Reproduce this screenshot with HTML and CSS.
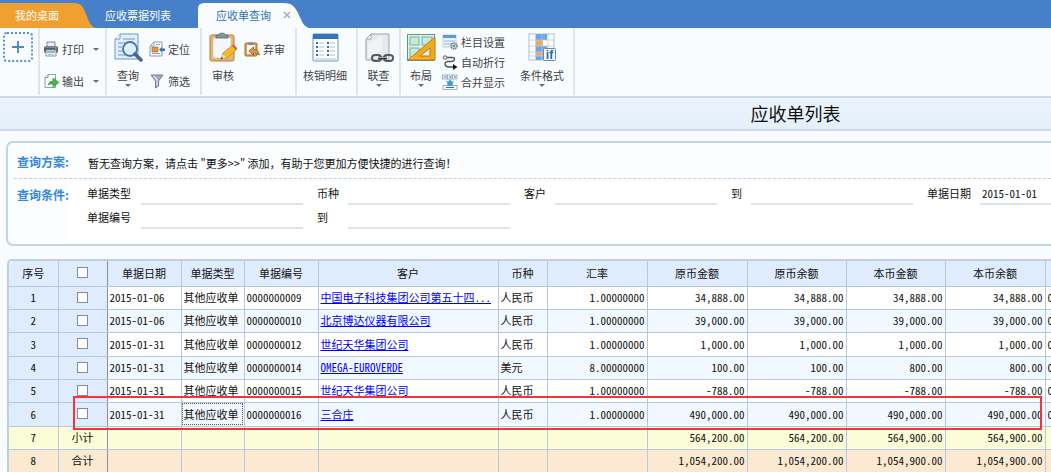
FILE: index.html
```html
<!DOCTYPE html>
<html lang="zh-CN">
<head>
<meta charset="utf-8">
<title>应收单列表</title>
<link rel="stylesheet" href="styles.css">
</head>
<body>
<nav class="tabs">
  <a class="tab tab-home" href="#home">
    <svg class="tab-shape" viewBox="0 0 96 25" preserveAspectRatio="none"><path d="M0 0H74C82 0 83 4 86 11C89 19 91 24 96 25H0Z" fill="#f0a030"/></svg>
    <span>我的桌面</span>
  </a>
  <a class="tab tab-plain" href="#bills"><span>应收票据列表</span></a>
  <a class="tab tab-active" href="#receivables">
    <svg class="tab-shape" viewBox="0 0 112 25" preserveAspectRatio="none"><path d="M0 25V6Q0 0 6 0H86C94 0 97 4 100 10C104 18 105 24 112 25Z" fill="#f9fcff"/></svg>
    <span>应收单查询</span>
    <svg class="tab-close" viewBox="0 0 8 8"><path d="M1 1L7 7M7 1L1 7" stroke="#a9b2bd" stroke-width="1.7"/></svg>
  </a>
</nav>

<div class="toolbar">
  <div class="group group-add">
    <button class="add" aria-label="添加"><svg width="14" height="14" viewBox="0 0 14 14"><path d="M7 1V13M1 7H13" stroke="#4b89c4" stroke-width="1.8"/></svg></button>
  </div>
  <div class="group group-output">
    <div class="stack">
      <button class="small"><svg class="icon" viewBox="0 0 16 16"><path d="M4 1H12V6H4Z" fill="#e9edf2" stroke="#7d8793"/><rect x="1" y="5" width="14" height="7" rx="2" fill="#555d68"/><path d="M2 6H14" stroke="#a7afb9"/><path d="M3 9H13V15H3Z" fill="#f5f8fb" stroke="#8c96a2"/><path d="M4 11H12" stroke="#48b7b0" stroke-width="1.5"/><path d="M5 13.5H11" stroke="#b4bbc4"/><circle cx="13" cy="7.5" r=".8" fill="#f28a62"/></svg><span>打印</span><i class="caret"></i></button>
      <button class="small"><svg class="icon" viewBox="0 0 16 16"><path d="M5 1.5H12.5V14.5H2V4.5Z" fill="#f9fbfc" stroke="#8c9cab"/><path d="M2 4.5H5V1.5" fill="#dce6ee" stroke="#8c9cab"/><path d="M5 12Q6 8 10 8V5L16 9.5L10 14V11Q7 10.500 5 12Z" fill="#48b548" stroke="#2c9838" stroke-width=".6"/></svg><span>输出</span><i class="caret"></i></button>
    </div>
  </div>
  <div class="group group-query">
    <button class="large"><svg class="icon-large" viewBox="0 0 30 30"><path d="M7 2H25V27H2V7Z" fill="#e2effc" stroke="#7295bd"/><path d="M2 7H7V2" fill="#fff" stroke="#7295bd"/><path d="M10 7H22M5 11H13M5 15H9M5 19H10M5 23H14" stroke="#94b6dc" stroke-width="1.500"/><circle cx="17" cy="17" r="7" fill="#d9edfe" fill-opacity=".9" stroke="#4774a9" stroke-width="1.8"/><path d="M13 17Q13 13 17 12" stroke="#fff" stroke-width="1.5" fill="none"/><path d="M22 22L28 28" stroke="#416692" stroke-width="3.500" stroke-linecap="round"/></svg><span>查询</span><i class="caret"></i></button>
    <div class="stack">
      <button class="small"><svg class="icon" viewBox="0 0 16 16"><path d="M5 1H13V15H1V5Z" fill="#f6fafe" stroke="#809cb9"/><path d="M1 5H5V1M7 3.500H11M3 12.5H11" fill="none" stroke="#8fabc9"/><rect x="3" y="6" width="6" height="5" fill="#e69639" stroke="#9b6a33" stroke-width=".6"/><path d="M10 8.500L13 6V7.500H16V10H13V11.5Z" fill="#3774b5"/></svg><span>定位</span></button>
      <button class="small"><svg class="icon" viewBox="0 0 16 16"><path d="M2 2H14L9.500 8V13L6.500 15V8Z" fill="#a6aac2" stroke="#73789a"/><path d="M4.500 3L8 7V13" stroke="#e4e6f0" stroke-width="1.200" fill="none"/></svg><span>筛选</span></button>
    </div>
  </div>
  <div class="group group-review">
    <button class="large"><svg class="icon-large" viewBox="0 0 30 30"><rect x="2" y="3" width="24" height="26" rx="1.500" fill="#e8b76f" stroke="#b37e38"/><path d="M5 6H23V23L20 26H5Z" fill="#f5f7fa" stroke="#cbbfae" stroke-width=".6"/><path d="M8 6V3H11Q11 1 14 1T17 3H20V6Z" fill="#89919b" stroke="#5b636d" stroke-width=".7"/><path d="M13 27L15 21L25 13L29 17L19 26Z" fill="#f6ba28" stroke="#af751c" stroke-width=".7"/><path d="M24 14L28 18L29 16L26 13Z" fill="#df5347"/><path d="M13 27L15 22L18 26Z" fill="#f5dfb9"/><path d="M12.500 27.500L14 25L15 26.500Z" fill="#333"/></svg><span>审核</span></button>
    <div class="stack">
      <button class="small"><svg class="icon" viewBox="0 0 16 16"><rect x="1" y="2" width="12" height="13" rx="1" fill="#dfa45a" stroke="#a66e2c"/><path d="M3 4H11V13H3Z" fill="#fff8ec"/><path d="M4.500 4V1.500H9.500V4Z" fill="#7f8791"/><path d="M5 10L9.500 6V8.500Q14 8 15.500 14Q13 11.500 9.500 12V14Z" fill="#e59a42" stroke="#91501c" stroke-width=".8"/></svg><span>弃审</span></button>
    </div>
  </div>
  <div class="group group-detail">
    <button class="large"><svg class="icon-large" viewBox="0 0 30 30"><rect x="3" y="2" width="25" height="27" rx="1" fill="#fff" stroke="#6b94c6"/><path d="M3 2H28V7H3Z" fill="#3674bb"/><g stroke="#a8bfdc" stroke-width="1.200"><path d="M9 11H14M20 11H25M9 15H14M20 15H25M9 19H14M20 19H25M9 23H14M20 23H25M5 27H26"/></g><g stroke="#2d6fc0" stroke-width="2"><path d="M6 11H8M17 11H19M6 15H8M17 15H19M6 19H8M17 19H19M6 23H8M17 23H19"/></g></svg><span>核销明细</span></button>
  </div>
  <div class="group group-link">
    <button class="large"><svg class="icon-large" viewBox="0 0 30 30"><path d="M7 2H25V28H2V7Z" fill="#e7eaed" stroke="#99a3ad"/><path d="M2 7H7V2Z" fill="#fff" stroke="#99a3ad"/><path d="M4 12L18 4V19L4 26Z" fill="#fff" opacity=".45"/><g fill="none" stroke="#555b62" stroke-width="2"><rect x="8" y="23" width="9" height="6" rx="3"/><rect x="20" y="23" width="9" height="6" rx="3"/></g><path d="M14 26H23" stroke="#31363b" stroke-width="2.500"/><path d="M14 25.500H23" stroke="#c2c7cc" stroke-width=".8"/></svg><span>联查</span><i class="caret"></i></button>
  </div>
  <div class="group group-layout">
    <button class="large"><svg class="icon-large" viewBox="0 0 30 30"><rect x="1.500" y="2.500" width="27" height="26" fill="#dff2ea" stroke="#559b82"/><g fill="#c9e9dc" stroke="#72b29c"><rect x="4" y="5" width="9" height="8"/><rect x="16" y="5" width="10" height="8"/><rect x="4" y="16" width="9" height="9"/></g><path d="M29 5V28H2Z" fill="#f5a91f" stroke="#bd7b17"/><path d="M24 16V24H14Z" fill="#dff0df" stroke="#bd7b17"/><path d="M6 27V25M10 27V25M14 27V26M18 27V26M22 27V26" stroke="#fbe0a0" stroke-width=".8"/></svg><span>布局</span><i class="caret"></i></button>
    <div class="stack stack-three">
      <button class="small"><svg class="icon" viewBox="0 0 16 16"><rect x="1" y="1" width="13" height="12" fill="#eef6fe" stroke="#b7cee6"/><path d="M1 1H14V4H1Z" fill="#5c9bdb"/><path d="M2 7H13M2 10H10" stroke="#8ab6e2"/><circle cx="12" cy="12" r="3" fill="#ccd2d8" stroke="#707a86" stroke-width="1.500" stroke-dasharray="1.500 .7"/><circle cx="12" cy="12" r="1" fill="#69737e"/></svg><span>栏目设置</span></button>
      <button class="small"><svg class="icon" viewBox="0 0 16 16"><circle cx="3" cy="3.500" r="1.700" fill="#fff" stroke="#4d5258"/><path d="M5 3.500H10Q13 3.500 12.500 5.500T9 7.500H6Q2.500 8 3 10.500T7 13H12" fill="none" stroke="#4d5258" stroke-width="1.300"/><path d="M11 10L15.500 13L11 16Z" fill="#151515"/></svg><span>自动折行</span></button>
      <button class="small"><svg class="icon" viewBox="0 0 16 16"><g fill="#f5faff" stroke="#8295a9" stroke-width=".7"><rect x=".5" y="1" width="4.500" height="4"/><rect x="5.500" y="1" width="4.500" height="4"/><rect x="10.500" y="1" width="4.500" height="4"/><rect x="1" y="11.500" width="14" height="4"/></g><path d="M2 3H4M7 3H9M12 3H14M4 13.500H12" stroke="#366ca6"/><path d="M8 5L9.500 7.500H12L10.500 9.500L11 12H5L5.500 9.500L4 7.500H6.500Z" fill="#4299d3"/></svg><span>合并显示</span></button>
    </div>
    <button class="large button-format"><svg class="icon-large" viewBox="0 0 30 30"><rect x="2" y="2" width="25" height="26" fill="#fff" stroke="#aec0d6"/><path d="M9 2H20V8H9ZM9 14H20V20H9ZM9 23H16V28H9Z" fill="#69a6ed"/><path d="M9 8H16V14H9ZM9 20H16V24H9Z" fill="#f3a851"/><path d="M2 8H27M2 14H27M2 20H27M2 24H27M8.500 2V28M15 2V28M21 2V28" stroke="#b9c9dc" stroke-width=".8"/><rect x="16.500" y="16.500" width="12" height="12" rx="1" fill="#f7fbff" stroke="#6288b4"/><text class="icon-text" x="22.500" y="26.500">if</text></svg><span>条件格式</span><i class="caret"></i></button>
  </div>
</div>

<header class="heading"><h1>应收单列表</h1></header>

<main>
  <section class="query">
    <div class="scheme"><strong>查询方案:</strong><span>暂无查询方案，请点击 "更多&gt;&gt;" 添加，有助于您更加方便快捷的进行查询！</span></div>
    <div class="conditions">
      <strong>查询条件:</strong>
      <form class="fields">
        <label for="type">单据类型</label><input id="type" type="text">
        <label class="next" for="currency">币种</label><input id="currency" type="text">
        <label class="next" for="customer">客户</label><input id="customer" type="text">
        <label class="next" for="customer-to">到</label><input id="customer-to" type="text">
        <label class="next" for="date">单据日期</label><input id="date" type="text" value="2015-01-01">
        <label for="number">单据编号</label><input id="number" type="text">
        <label class="next" for="number-to">到</label><input id="number-to" type="text">
      </form>
    </div>
  </section>

  <section class="grid">
    <table>
      <colgroup><col class="w-index"><col class="w-index"><col class="w-date"><col class="w-type"><col class="w-date"><col class="w-customer"><col class="w-index"><col class="w-rate"><col class="w-rate"><col class="w-amount"><col class="w-amount"><col class="w-rate"><col class="w-amount"></colgroup>
      <thead><tr><th>序号</th><th><input type="checkbox" aria-label="全选"></th><th>单据日期</th><th>单据类型</th><th>单据编号</th><th>客户</th><th>币种</th><th>汇率</th><th>原币金额</th><th>原币余额</th><th>本币金额</th><th>本币余额</th><th></th></tr></thead>
      <tbody>
        <tr><td>1</td><td><input type="checkbox" aria-label="选择 1"></td><td>2015-01-06</td><td>其他应收单</td><td>0000000009</td><td><a href="#c1">中国电子科技集团公司第五十四...</a></td><td>人民币</td><td>1.00000000</td><td>34,888.00</td><td>34,888.00</td><td>34,888.00</td><td>34,888.00</td><td>0</td></tr>
        <tr><td>2</td><td><input type="checkbox" aria-label="选择 2"></td><td>2015-01-06</td><td>其他应收单</td><td>0000000010</td><td><a href="#c2">北京博达仪器有限公司</a></td><td>人民币</td><td>1.00000000</td><td>39,000.00</td><td>39,000.00</td><td>39,000.00</td><td>39,000.00</td><td>0</td></tr>
        <tr><td>3</td><td><input type="checkbox" aria-label="选择 3"></td><td>2015-01-31</td><td>其他应收单</td><td>0000000012</td><td><a href="#c3">世纪天华集团公司</a></td><td>人民币</td><td>1.00000000</td><td>1,000.00</td><td>1,000.00</td><td>1,000.00</td><td>1,000.00</td><td>0</td></tr>
        <tr><td>4</td><td><input type="checkbox" aria-label="选择 4"></td><td>2015-01-31</td><td>其他应收单</td><td>0000000014</td><td><a href="#c4">OMEGA-EUROVERDE</a></td><td>美元</td><td>8.00000000</td><td>100.00</td><td>100.00</td><td>800.00</td><td>800.00</td><td>0</td></tr>
        <tr><td>5</td><td><input type="checkbox" aria-label="选择 5"></td><td>2015-01-31</td><td>其他应收单</td><td>0000000015</td><td><a href="#c5">世纪天华集团公司</a></td><td>人民币</td><td>1.00000000</td><td>-788.00</td><td>-788.00</td><td>-788.00</td><td>-788.00</td><td>0</td></tr>
        <tr><td>6</td><td><input type="checkbox" aria-label="选择 6"></td><td>2015-01-31</td><td class="focused">其他应收单</td><td>0000000016</td><td><a href="#c6">三合庄</a></td><td>人民币</td><td>1.00000000</td><td>490,000.00</td><td>490,000.00</td><td>490,000.00</td><td>490,000.00</td><td>0</td></tr>
        <tr class="subtotal"><td>7</td><td>小计</td><td></td><td></td><td></td><td></td><td></td><td></td><td>564,200.00</td><td>564,200.00</td><td>564,900.00</td><td>564,900.00</td><td></td></tr>
        <tr class="total"><td>8</td><td>合计</td><td></td><td></td><td></td><td></td><td></td><td></td><td>1,054,200.00</td><td>1,054,200.00</td><td>1,054,900.00</td><td>1,054,900.00</td><td></td></tr>
      </tbody>
    </table>
    <div class="marker"></div>
  </section>
</main>
</body>
</html>
```
FILE: styles.css
```css
* { box-sizing: border-box; }
body {
  margin: 0;
  overflow: hidden;
  background: #f9fcff;
  color: #111;
  font: 11px/14px "Noto Sans CJK SC", sans-serif;
}
button, input { font: inherit; color: inherit; }
button { border: 0; padding: 0; background: none; }

/* Tabs */
.tabs { display: flex; height: 28px; padding-top: 3px; background: #4680c8; }
.tab { position: relative; display: flex; align-items: center; padding-bottom: 2px; color: #fff; text-decoration: none; }
.tab span { position: relative; }
.tab-shape { position: absolute; inset: 0; width: 100%; height: 100%; }
.tab-home { width: 96px; padding-left: 15px; }
.tab-plain { width: 102px; padding-left: 9px; }
.tab-active { width: 112px; padding-left: 18px; gap: 12px; color: #2f70b6; }
.tab-close { position: relative; width: 8px; height: 8px; }

/* Toolbar */
.toolbar { display: flex; height: 70px; padding-bottom: 1px; border-bottom: 2px solid #cbd9e8; color: #3f4347; }
.group { display: flex; align-items: flex-start; padding-top: 4px; border-right: 2px solid #e0e5ea; white-space: nowrap; }
.group-add { width: 40px; padding-left: 3px; }
.group-output { width: 67px; padding-left: 3px; }
.group-query { width: 95px; padding-left: 6px; gap: 6px; }
.group-review { width: 95px; padding-left: 6px; gap: 6px; }
.group-detail { width: 61px; padding-right: 3px; justify-content: center; }
.group-link { width: 43px; justify-content: center; }
.group-layout { width: 174px; padding-left: 5px; gap: 6px; }
.add { display: grid; place-items: center; width: 30px; height: 30px; border: 2px dotted #5792cd; border-radius: 4px; }
.large { display: flex; flex-direction: column; align-items: center; min-width: 28px; }
.large span { margin-top: 6px; }
.icon-large { width: 30px; height: 30px; }
.caret { width: 0; height: 0; border: 3px solid transparent; border-top-color: #6b6f73; border-bottom: 0; }
.large .caret { margin-top: 2px; }
.stack { display: flex; flex-direction: column; gap: 16px; padding-top: 9px; }
.stack-three { gap: 4px; padding-top: 2px; }
.small { display: flex; align-items: center; height: 16px; gap: 3px; }
.small .caret { margin-left: 6px; }
.icon { width: 16px; height: 16px; }
.button-format { margin-left: 9px; }
.icon-text { font: bold 12px "Liberation Sans", sans-serif; fill: #2867a5; text-anchor: middle; }

/* Title */
.heading { padding: 3px 0 4px 540px; background: linear-gradient(#ebf4fd, #e5eff9); border-bottom: 2px solid #cedbea; text-align: center; }
h1 { margin: 0; font-size: 18px; line-height: 24px; font-weight: 400; }

/* Query panel */
main { padding: 10px 0 0 6px; }
.query { height: 105px; border: 2px solid #c2d4e6; border-right: 0; border-radius: 7px 0 0 7px; background: #fbfdff; }
.query strong { flex: none; width: 62px; color: #3388dc; font-size: 12px; font-weight: 700; white-space: nowrap; }
.scheme { display: flex; margin-left: 6px; padding: 12px 0 8px 3px; border-bottom: 1px dashed #c9ced5; }
.scheme span { padding: 1px 0 0 9px; }
.conditions { display: flex; padding: 2px 0 0 9px; }
.conditions strong { padding-top: 7px; width: 53px; }
.fields {
  flex: 1;
  display: grid;
  grid-template-columns: 54px 162px 45px 162px 45px 162px 34px 162px 67px minmax(71px, 1fr);
  grid-auto-rows: 24px;
  height: 60px;
  padding-left: 17px;
  background: #fff;
}
.fields label { padding-top: 5px; }
.fields .next { padding-left: 14px; }
.fields input { min-width: 0; width: 100%; height: 24px; padding: 1px 2px 0; border: 0; border-bottom: 2px solid #dfe2e6; background: none; outline: 0; font-feature-settings: "hwid"; }

/* Grid */
.grid { position: relative; margin: 13px 0 0 1px; overflow: hidden; border: 2px solid #c0d0e0; border-right: 0; border-bottom: 0; border-radius: 5px 0 0; font-feature-settings: "hwid"; }
table { width: 1134px; table-layout: fixed; border-collapse: collapse; }
.w-index { width: 49px; }
.w-date { width: 74px; }
.w-type { width: 63px; }
.w-customer { width: 180px; }
.w-rate { width: 100px; }
.w-amount { width: 99px; }
th, td { height: 23px; padding: 0 2px 1px; border-right: 1px solid #b5c8e0; border-bottom: 1px solid #b5c8e0; overflow: hidden; white-space: nowrap; font-weight: 400; text-align: left; }
th { height: 25px; background: #dfecfd; text-align: center; }
tbody tr { background: #fff; }
tbody tr:nth-child(even) { background: #f2f8ff; }
tbody tr:nth-child(3n) td { height: 24px; }
td:nth-child(-n+2) { background: #dfecfd; text-align: center; }
th:nth-child(2), td:nth-child(2) { border-right: 1px solid #8a919c; }
td:nth-child(n+8) { text-align: right; }
td:nth-child(13) { text-align: left; }
td a { color: #00f; }
tbody tr.subtotal, .subtotal td:nth-child(-n+2) { background: #fbfdd8; }
tbody tr.total:nth-child(n), .total td:nth-child(-n+2) { background: #fce9d2; }
.focused { outline: 1px dotted #555; outline-offset: -2px; }
input[type="checkbox"] { appearance: none; display: block; width: 11px; height: 11px; margin: 0 auto; border: 1px solid #858b92; background: #fff; }
.marker { position: absolute; left: 64px; right: 9px; top: 135px; height: 34px; border: 2px solid #f5333b; pointer-events: none; }
```
